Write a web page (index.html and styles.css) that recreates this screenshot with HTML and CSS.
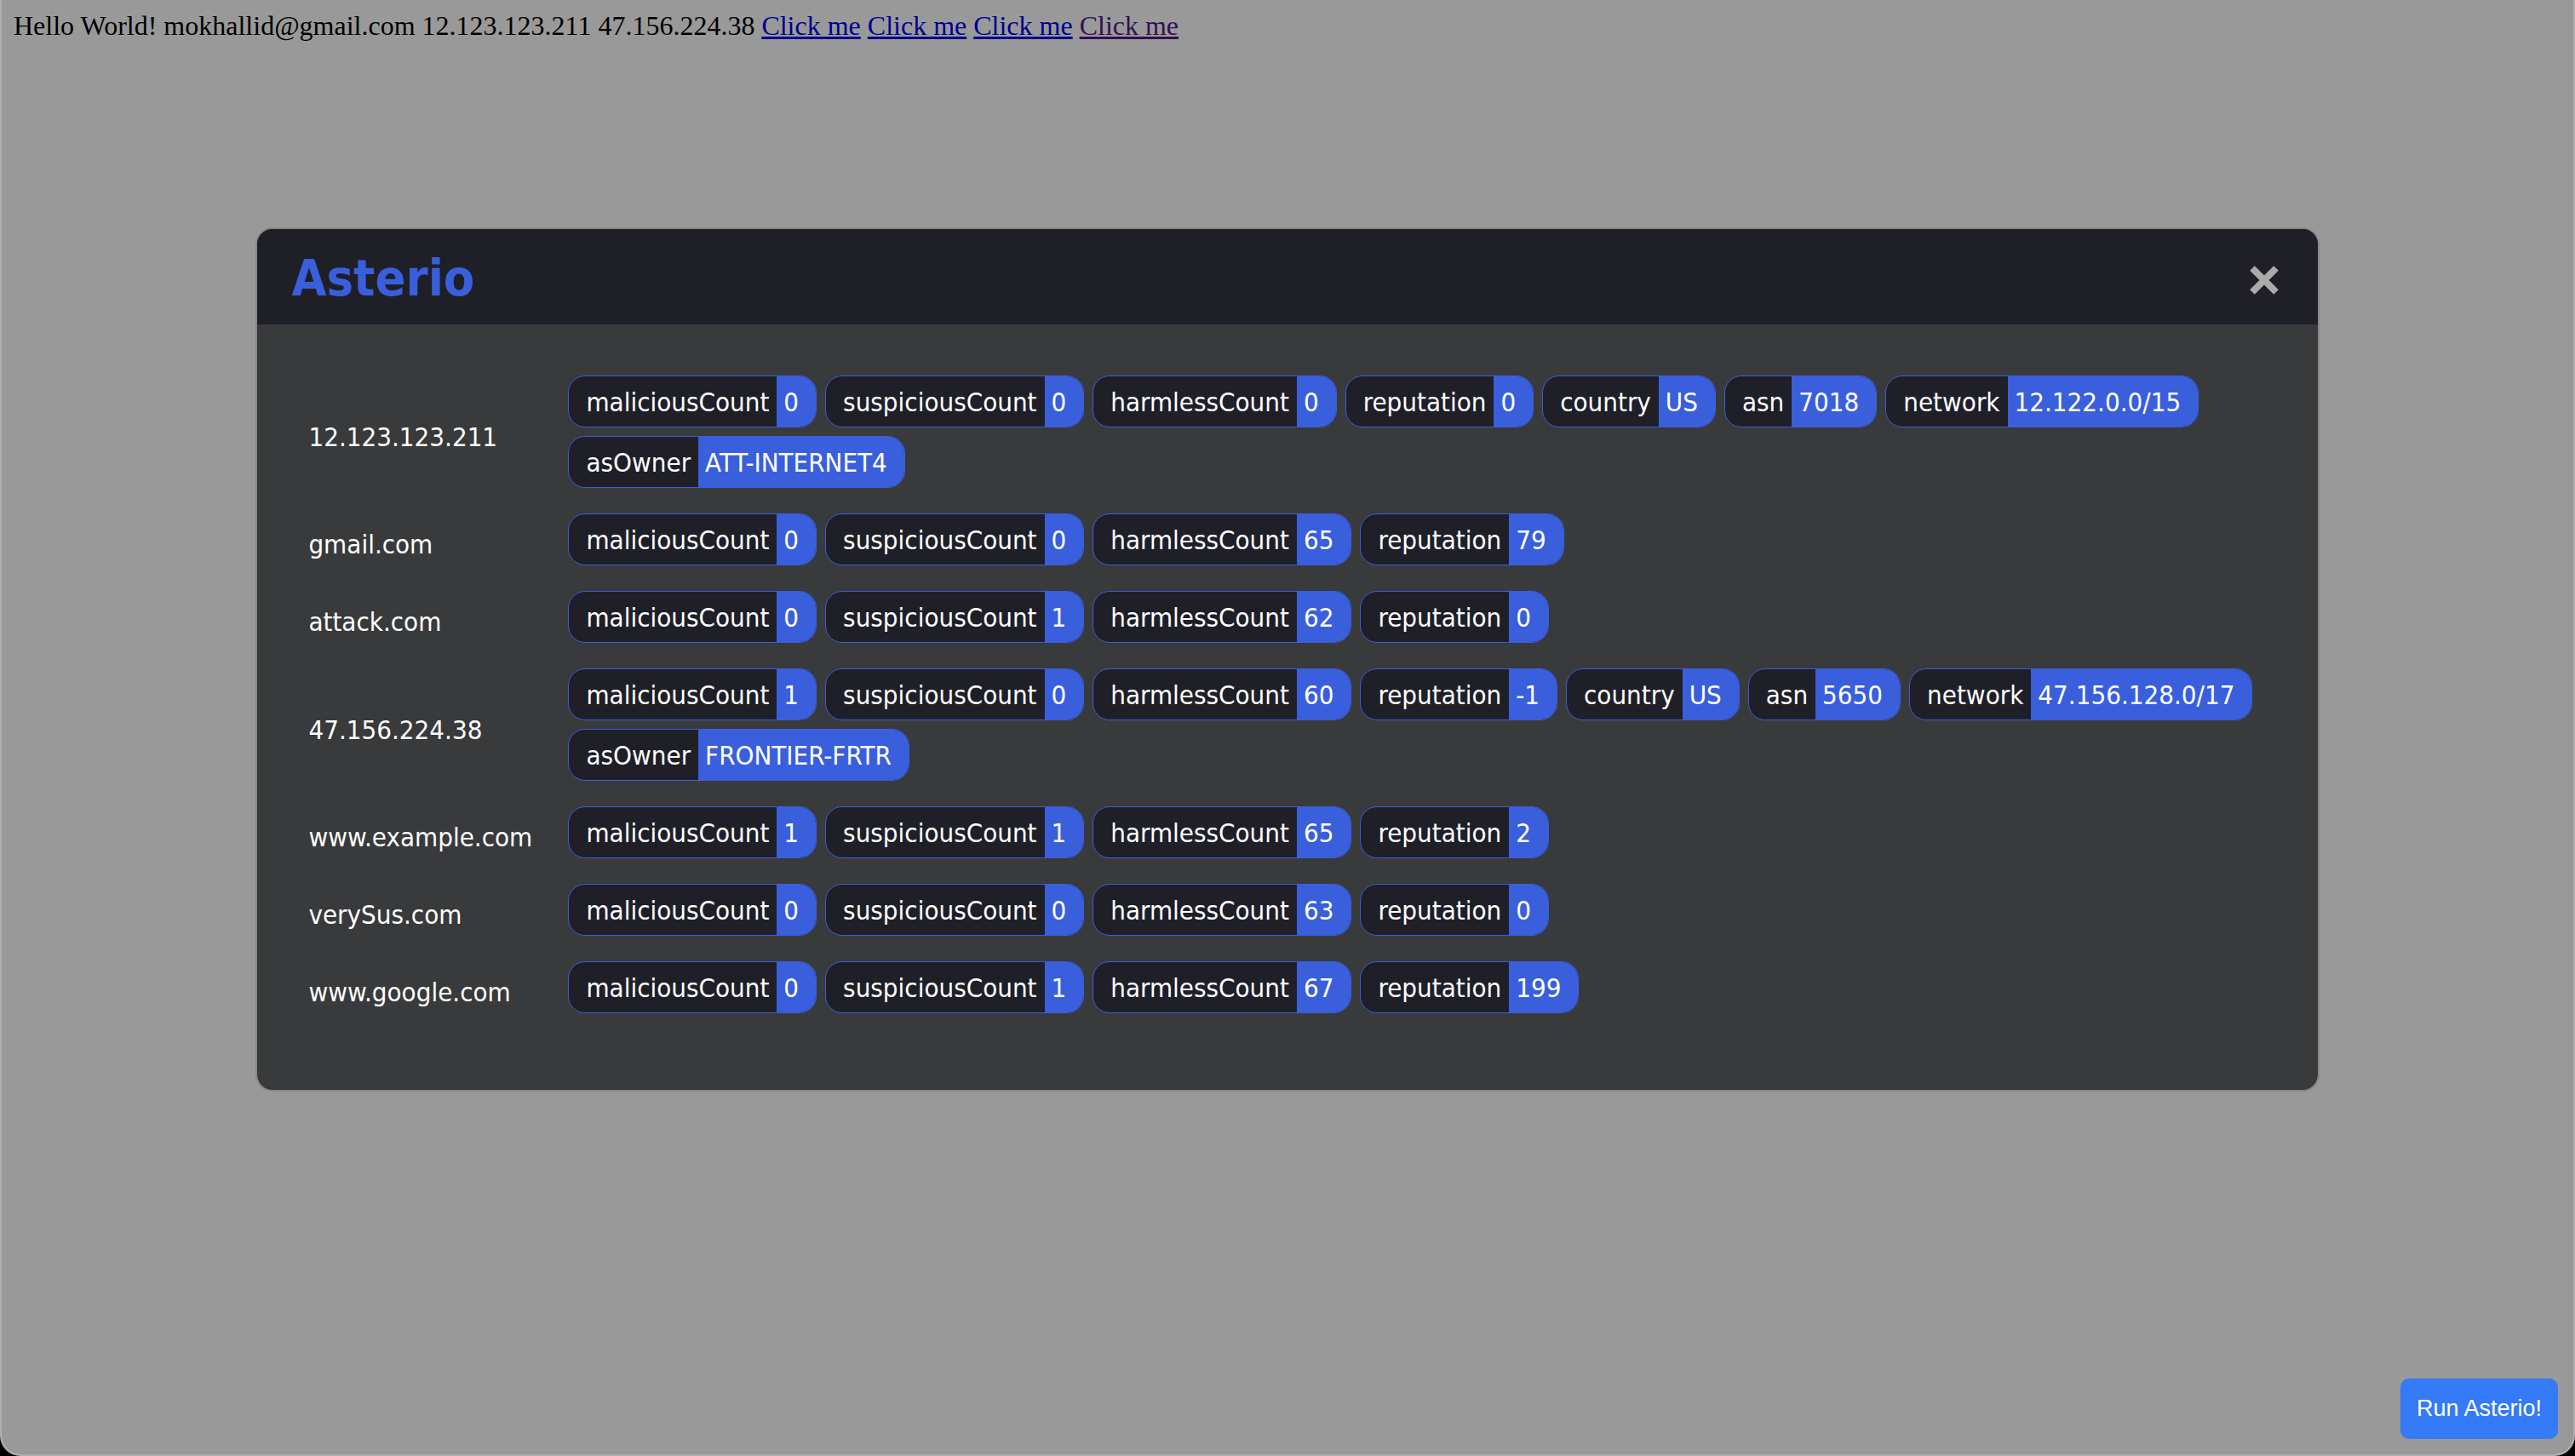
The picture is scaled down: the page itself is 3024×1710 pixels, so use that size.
FILE: index.html
```html
<!DOCTYPE html>
<html lang="en">
<head>
<meta charset="utf-8">
<title>Asterio</title>
<link rel="stylesheet" href="styles.css">
</head>
<body>
<div class="window">
  <p class="page-text">Hello World! mokhallid@gmail.com 12.123.123.211 47.156.224.38
    <a href="#attack">Click me</a>
    <a href="#example">Click me</a>
    <a href="#verysus">Click me</a>
    <a class="seen" href="#google">Click me</a>
  </p>
  <div class="overlay">
    <section class="modal" role="dialog" aria-labelledby="modal-title">
      <header class="modal-header">
        <h1 class="modal-title" id="modal-title">Asterio</h1>
        <button class="close" type="button" aria-label="Close">
          <svg class="close-icon" viewBox="0 0 46 46" aria-hidden="true"><path d="M9 9L37 37M37 9L9 37" fill="none" stroke="currentColor" stroke-width="8"/></svg>
        </button>
      </header>
      <div class="modal-body">
        <table class="results">
          <tbody>
            <tr>
              <th scope="row">12.123.123.211</th>
              <td><div class="tags">
                <span class="tag"><span class="key">maliciousCount</span><span class="value">0</span></span>
                <span class="tag"><span class="key">suspiciousCount</span><span class="value">0</span></span>
                <span class="tag"><span class="key">harmlessCount</span><span class="value">0</span></span>
                <span class="tag"><span class="key">reputation</span><span class="value">0</span></span>
                <span class="tag"><span class="key">country</span><span class="value">US</span></span>
                <span class="tag"><span class="key">asn</span><span class="value">7018</span></span>
                <span class="tag"><span class="key">network</span><span class="value">12.122.0.0/15</span></span>
                <span class="tag"><span class="key">asOwner</span><span class="value">ATT-INTERNET4</span></span>
              </div></td>
            </tr>
            <tr>
              <th scope="row">gmail.com</th>
              <td><div class="tags">
                <span class="tag"><span class="key">maliciousCount</span><span class="value">0</span></span>
                <span class="tag"><span class="key">suspiciousCount</span><span class="value">0</span></span>
                <span class="tag"><span class="key">harmlessCount</span><span class="value">65</span></span>
                <span class="tag"><span class="key">reputation</span><span class="value">79</span></span>
              </div></td>
            </tr>
            <tr>
              <th scope="row">attack.com</th>
              <td><div class="tags">
                <span class="tag"><span class="key">maliciousCount</span><span class="value">0</span></span>
                <span class="tag"><span class="key">suspiciousCount</span><span class="value">1</span></span>
                <span class="tag"><span class="key">harmlessCount</span><span class="value">62</span></span>
                <span class="tag"><span class="key">reputation</span><span class="value">0</span></span>
              </div></td>
            </tr>
            <tr>
              <th scope="row">47.156.224.38</th>
              <td><div class="tags">
                <span class="tag"><span class="key">maliciousCount</span><span class="value">1</span></span>
                <span class="tag"><span class="key">suspiciousCount</span><span class="value">0</span></span>
                <span class="tag"><span class="key">harmlessCount</span><span class="value">60</span></span>
                <span class="tag"><span class="key">reputation</span><span class="value">-1</span></span>
                <span class="tag"><span class="key">country</span><span class="value">US</span></span>
                <span class="tag"><span class="key">asn</span><span class="value">5650</span></span>
                <span class="tag"><span class="key">network</span><span class="value">47.156.128.0/17</span></span>
                <span class="tag"><span class="key">asOwner</span><span class="value">FRONTIER-FRTR</span></span>
              </div></td>
            </tr>
            <tr>
              <th scope="row">www.example.com</th>
              <td><div class="tags">
                <span class="tag"><span class="key">maliciousCount</span><span class="value">1</span></span>
                <span class="tag"><span class="key">suspiciousCount</span><span class="value">1</span></span>
                <span class="tag"><span class="key">harmlessCount</span><span class="value">65</span></span>
                <span class="tag"><span class="key">reputation</span><span class="value">2</span></span>
              </div></td>
            </tr>
            <tr>
              <th scope="row">verySus.com</th>
              <td><div class="tags">
                <span class="tag"><span class="key">maliciousCount</span><span class="value">0</span></span>
                <span class="tag"><span class="key">suspiciousCount</span><span class="value">0</span></span>
                <span class="tag"><span class="key">harmlessCount</span><span class="value">63</span></span>
                <span class="tag"><span class="key">reputation</span><span class="value">0</span></span>
              </div></td>
            </tr>
            <tr>
              <th scope="row">www.google.com</th>
              <td><div class="tags">
                <span class="tag"><span class="key">maliciousCount</span><span class="value">0</span></span>
                <span class="tag"><span class="key">suspiciousCount</span><span class="value">1</span></span>
                <span class="tag"><span class="key">harmlessCount</span><span class="value">67</span></span>
                <span class="tag"><span class="key">reputation</span><span class="value">199</span></span>
              </div></td>
            </tr>
          </tbody>
        </table>
      </div>
    </section>
  </div>
  <button class="run" type="button">Run Asterio!</button>
</div>
</body>
</html>
```
FILE: styles.css
```css
html {
  background: #000;
}

body {
  margin: 0;
}

.window {
  position: relative;
  box-sizing: border-box;
  min-height: 100vh;
  overflow: hidden;
  border: 2px solid #aeaeae;
  border-top: 0;
  border-radius: 0 0 24px 24px;
  background: #fff;
}

.page-text {
  margin: 0;
  padding: 12px 14px;
  color: #000;
  font: 32px/37px "Liberation Serif", "Times New Roman", serif;
}

.page-text a {
  color: #0000ee;
  text-decoration-thickness: 3px;
  text-underline-offset: 2px;
}

.page-text .seen {
  color: #551a8b;
}

/* Dimmed backdrop, reaching under the window's side borders */
.overlay {
  position: absolute;
  inset: 0 -2px;
  padding-top: 267px;
  background: rgba(0, 0, 0, 0.4);
}

.modal {
  width: 80%;
  margin: 0 auto;
  overflow: hidden;
  border: 2px solid #888;
  border-radius: 20px;
  background: #393a3b;
  color: #fff;
  font: 31px/39px "DejaVu Sans Condensed", Tahoma, "DejaVu Sans", sans-serif;
}

.modal-header {
  display: flex;
  align-items: center;
  justify-content: space-between;
  padding: 22px 40px 18px;
  background: #1f1f28;
}

.modal-title {
  margin: 0;
  color: #3a5fdc;
  font-size: 59px;
  font-weight: bold;
  line-height: 72px;
}

.close {
  display: flex;
  padding: 4px 0 0;
  border: 0;
  background: none;
  color: #aaa;
}

.close-icon {
  width: 46px;
  height: 46px;
}

.modal-body {
  padding: 60px;
}

.results {
  width: 100%;
  border-collapse: collapse;
}

.results th {
  width: 305px;
  padding: 12px 0 30px;
  font-weight: normal;
  text-align: left;
  vertical-align: middle;
}

.results td {
  padding: 0 0 30px;
}

.tags {
  display: flex;
  flex-wrap: wrap;
  gap: 10px;
}

.tag {
  display: flex;
  overflow: hidden;
  border: 1px solid #3a5fdc;
  border-radius: 20px;
  background: #1f1f28;
}

.key {
  padding: 11px 9px 9px 20px;
}

.value {
  padding: 11px 20px 9px 8px;
  background: #3a5fdc;
}

.run {
  position: absolute;
  right: 18px;
  bottom: 18px;
  padding: 20px 19px;
  border: 0;
  border-radius: 10px;
  background: #357af6;
  color: #fff;
  font: 27px/31px "Liberation Sans", Arial, sans-serif;
}
```
